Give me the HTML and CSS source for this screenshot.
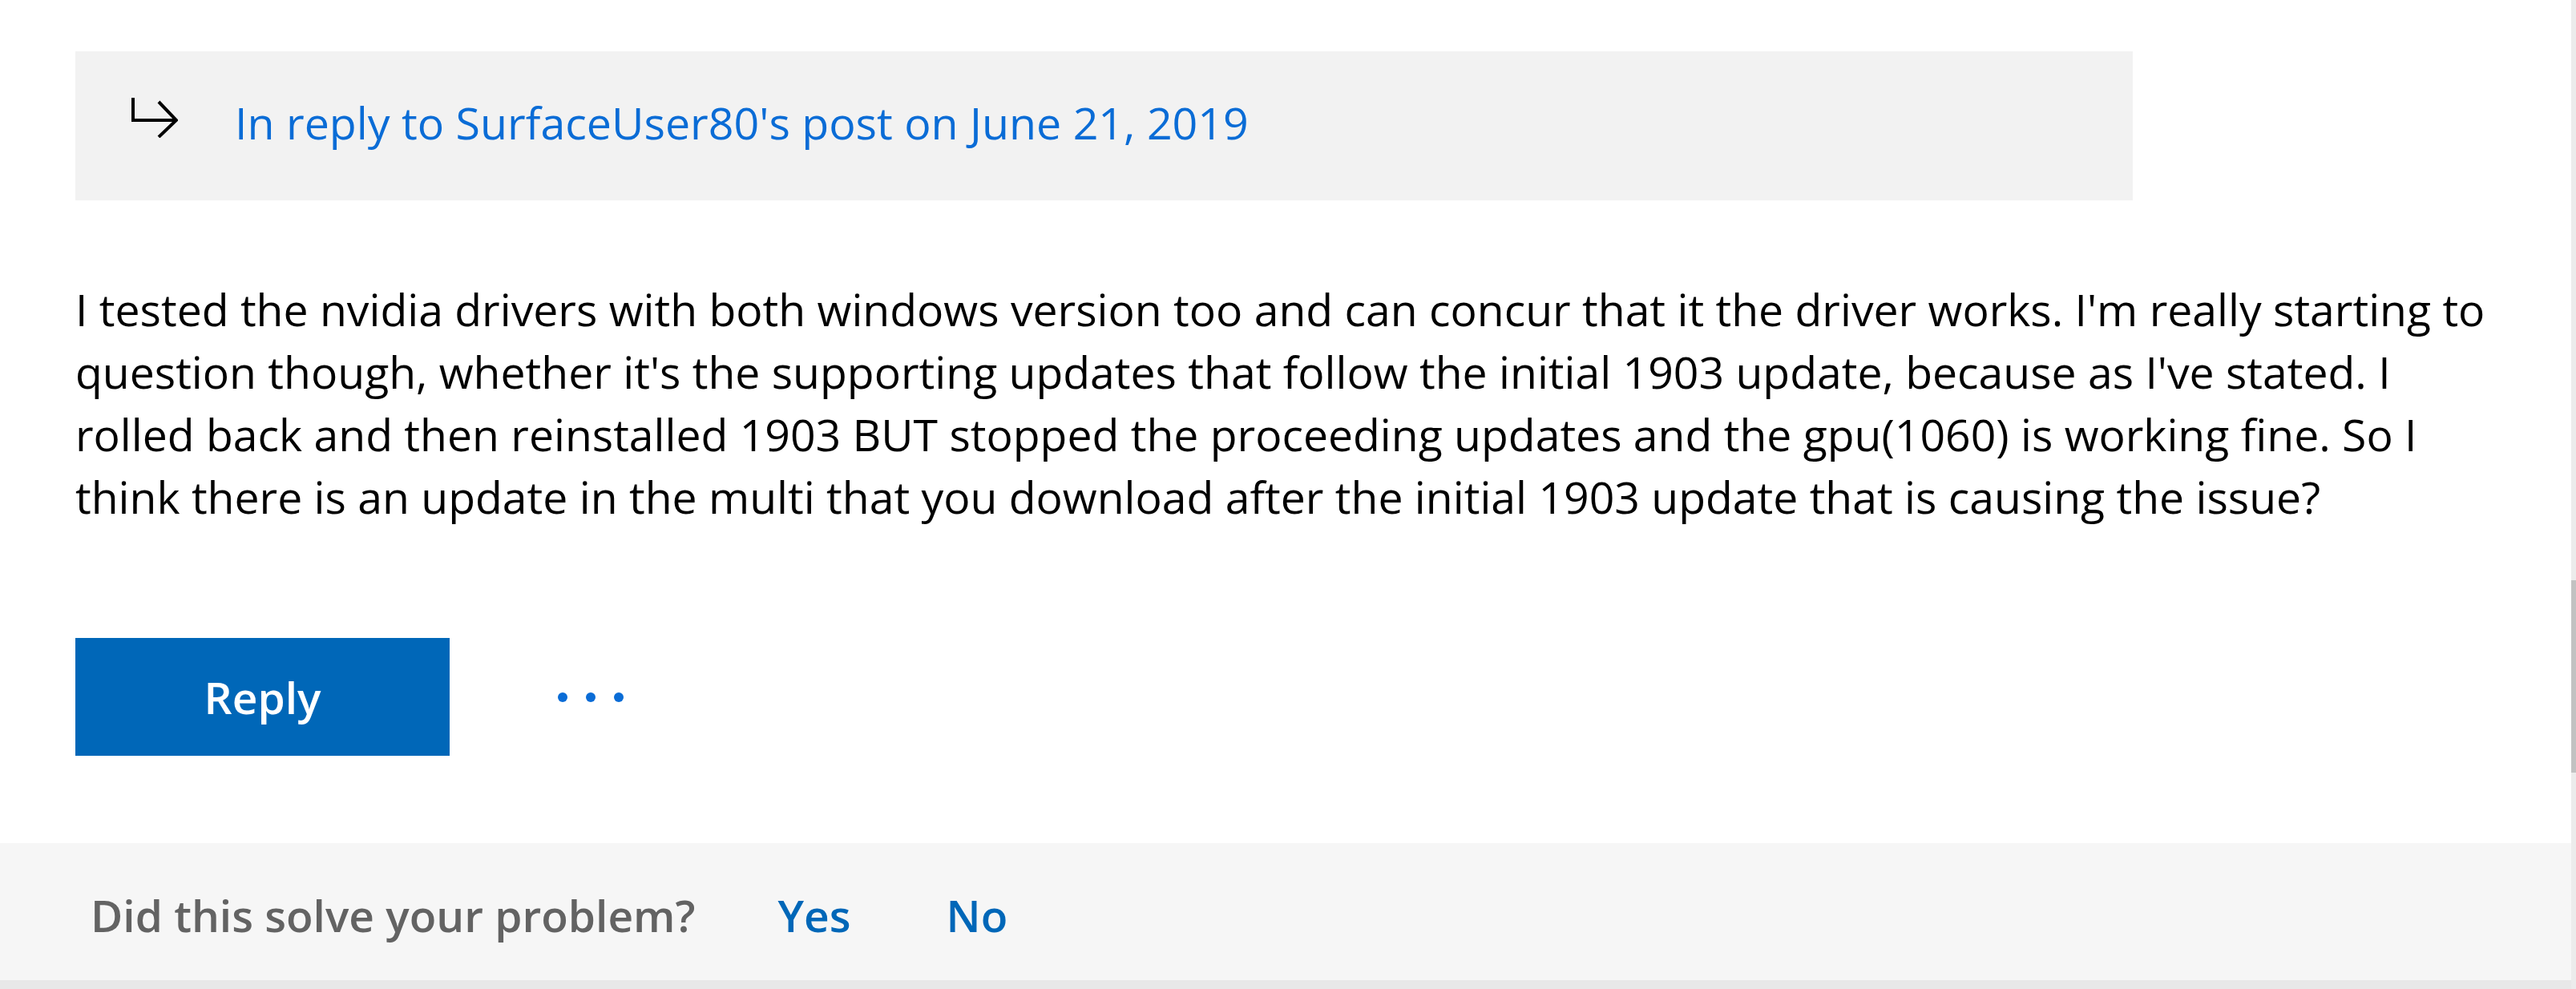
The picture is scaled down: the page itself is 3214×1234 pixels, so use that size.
FILE: index.html
```html
<!DOCTYPE html>
<html lang="en">
<head>
<meta charset="utf-8">
<title>Reply</title>
<link rel="stylesheet" href="styles.css">
</head>
<body>
<div class="window">
  <div class="page">
    <div class="main">
      <div class="reply-to">
        <svg class="reply-icon" width="58" height="50" viewBox="0 0 58 50" aria-hidden="true">
          <path d="M2 0 V28 H56" fill="none" stroke="#000" stroke-width="4"/>
          <path d="M34 5 L56 28 L34 49" fill="none" stroke="#000" stroke-width="4"/>
        </svg>
        <a class="reply-link" href="#">In reply to SurfaceUser80's post on June 21, 2019</a>
      </div>
      <p class="post-body">I tested the nvidia drivers with both windows version too and can concur that it the driver works. I'm really starting to<br>question though, whether it's the supporting updates that follow the initial 1903 update, because as I've stated. I<br>rolled back and then reinstalled 1903 BUT stopped the proceeding updates and the gpu(1060) is working fine. So I<br>think there is an update in the multi that you download after the initial 1903 update that is causing the issue?</p>
      <div class="actions">
        <button class="reply-btn" type="button">Reply</button>
        <button class="more-btn" type="button" aria-label="More options">
          <span class="dot"></span><span class="dot"></span><span class="dot"></span>
        </button>
      </div>
    </div>
    <div class="feedback">
      <span class="feedback-q">Did this solve your problem?</span>
      <a class="feedback-a" href="#">Yes</a>
      <a class="feedback-a" href="#">No</a>
    </div>
  </div>
  <div class="scrollbar"><div class="thumb"></div></div>
</div>
</body>
</html>
```

FILE: styles.css
```css
html, body {
  margin: 0;
  padding: 0;
  background: #ffffff;
}

body {
  font-family: "Open Sans", "Noto Sans", "Liberation Sans", sans-serif;
  color: #000;
  overflow: hidden;
}

.window {
  display: flex;
  width: 3214px;
  height: 1234px;
}

.page {
  flex: 1;
  display: flex;
  flex-direction: column;
}

.main {
  padding: 64px 0 0 94px;
}

.reply-to {
  width: 2567px;
  height: 186px;
  background: #f2f2f2;
  display: flex;
  align-items: center;
  box-sizing: border-box;
  padding-left: 70px;
}

.reply-icon {
  flex: none;
  margin-top: -20px;
}

.reply-link {
  margin-left: 71px;
  margin-top: -10px;
  font-size: 55.5px;
  color: #0a6cd6;
  text-decoration: none;
  white-space: nowrap;
}

.post-body {
  margin: 97px 0 0;
  font-size: 55.3px;
  line-height: 78px;
  white-space: nowrap;
}

.actions {
  margin-top: 137px;
  display: flex;
  align-items: center;
}

.reply-btn {
  width: 467px;
  height: 147px;
  border: 0;
  background: #0067b8;
  color: #fff;
  font-family: inherit;
  font-size: 55px;
  font-weight: 600;
  padding: 0;
}

.more-btn {
  margin-left: 135px;
  border: 0;
  background: transparent;
  padding: 0;
  display: flex;
  gap: 23px;
  align-items: center;
}

.dot {
  width: 12px;
  height: 12px;
  border-radius: 50%;
  background: #0a6cd6;
}

.feedback {
  margin-top: 109px;
  height: 171px;
  box-sizing: content-box;
  background: #f6f6f6;
  border-bottom: 11px solid #e8e8e8;
  display: flex;
  align-items: center;
  padding-left: 113px;
  font-size: 55px;
  font-weight: 600;
}

.feedback-q,
.feedback-a {
  margin-top: 8px;
}

.feedback-q {
  color: #636363;
}

.feedback-a {
  color: #0067b8;
  text-decoration: none;
  margin-left: 103px;
}

.feedback-a + .feedback-a {
  margin-left: 119px;
}

.scrollbar {
  width: 6px;
  background: #ececec;
  display: flex;
  flex-direction: column;
  padding-top: 724px;
}

.thumb {
  height: 240px;
  background: #c2c2c2;
}
```
